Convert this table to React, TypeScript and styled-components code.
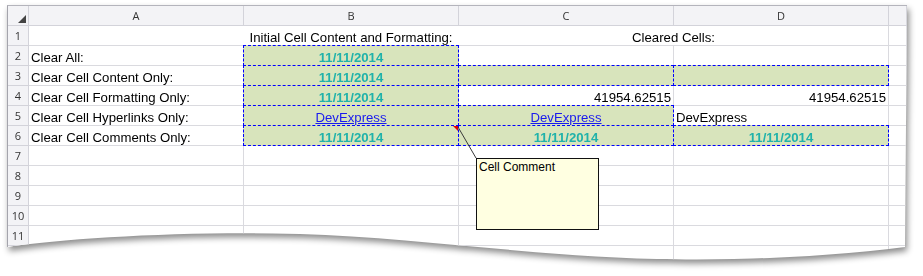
import styled, { createGlobalStyle } from 'styled-components'

const GlobalStyle = createGlobalStyle`
    body {
        margin: 0;
        background: #fff;
    }
`

type Kind = 'label' | 'date' | 'link' | 'num' | 'plain' | 'title'

type CellSpec = {
    text?: string
    kind?: Kind
    align?: 'left' | 'center' | 'right'
    fill?: boolean
    span?: number
    noRight?: boolean
    comment?: boolean
}

const DATE = '11/11/2014'
const NUM = '41954.62515'

const rows: CellSpec[][] = [
    [{ noRight: true }, { text: 'Initial Cell Content and Formatting:', kind: 'title', align: 'center', noRight: true }, { text: 'Cleared Cells:', kind: 'title', align: 'center', span: 2 }],
    [{ text: 'Clear All:' }, { text: DATE, kind: 'date', align: 'center', fill: true }, {}, {}],
    [{ text: 'Clear Cell Content Only:' }, { text: DATE, kind: 'date', align: 'center', fill: true }, { fill: true }, { fill: true }],
    [{ text: 'Clear Cell Formatting Only:' }, { text: DATE, kind: 'date', align: 'center', fill: true }, { text: NUM, kind: 'num', align: 'right' }, { text: NUM, kind: 'num', align: 'right' }],
    [{ text: 'Clear Cell Hyperlinks Only:' }, { text: 'DevExpress', kind: 'link', align: 'center', fill: true }, { text: 'DevExpress', kind: 'link', align: 'center', fill: true }, { text: 'DevExpress', kind: 'plain' }],
    [{ text: 'Clear Cell Comments Only:' }, { text: DATE, kind: 'date', align: 'center', fill: true, comment: true }, { text: DATE, kind: 'date', align: 'center', fill: true }, { text: DATE, kind: 'date', align: 'center', fill: true }],
    [{}, {}, {}, {}],
    [{}, {}, {}, {}],
    [{}, {}, {}, {}],
    [{}, {}, {}, {}],
    [{}, {}, {}, {}],
    [{}, {}, {}, {}],
]

const columns = ['A', 'B', 'C', 'D', '']

export default function App() {
    return (
        <Page>
            <GlobalStyle />
            <Stage>
                <Paper>
                    <Sheet>
                        <Corner />
                        {columns.map((c, i) => (
                            <ColHeader key={i}>{c}</ColHeader>
                        ))}
                        {rows.map((row, r) => (
                            <Row key={r} index={r + 1} cells={row} />
                        ))}
                    </Sheet>
                </Paper>
                <Connector width="900" height="260">
                    <line x1="451" y1="122" x2="469" y2="153" stroke="#3a3a3a" strokeWidth="1" />
                </Connector>
                <CommentBox>Cell Comment</CommentBox>
            </Stage>
        </Page>
    )
}

function Row({ index, cells }: { index: number; cells: CellSpec[] }) {
    return (
        <>
            <RowHeader>{index}</RowHeader>
            {cells.map((c, i) => (
                <Cell key={i} $align={c.align || 'left'} $fill={!!c.fill} $span={c.span || 1} $noRight={!!c.noRight}>
                    {c.text && <CellText $kind={c.kind || 'label'}>{c.text}</CellText>}
                    {c.comment && <CommentMark />}
                </Cell>
            ))}
            <Cell $align="left" $fill={false} $span={1} $noRight={false} />
        </>
    )
}

const Page = styled.div`
    padding: 5px 0 0 7px;
`

const Stage = styled.div`
    position: relative;
    width: 900px;
    height: 268px;
`

const Paper = styled.div`
    filter: drop-shadow(2px 4px 3px rgba(0, 0, 0, 0.45));
`

const Sheet = styled.div`
    display: grid;
    grid-template-columns: 21px repeat(4, 215px) 1fr;
    grid-auto-rows: 20px;
    width: 900px;
    height: 261px;
    box-sizing: border-box;
    border-top: 1px solid #b4b4bc;
    border-left: 1px solid #a4a4ac;
    background: #fff;
    overflow: hidden;
    clip-path: path('M0 0 H900 L899 120 L898 242 C 820 252, 725 256, 650 254 C 525 251, 400 232, 293 229 C 180 226, 60 233, 0 242 Z');
    font-family: "Liberation Sans", Arial, sans-serif;
    font-size: 13.2px;
`

const HeaderBase = styled.div`
    display: flex;
    align-items: center;
    justify-content: center;
    box-sizing: border-box;
    background: #f3f3f6;
    border-right: 1px solid #d3d3da;
    border-bottom: 1px solid #d3d3da;
    color: #333;
    font-family: "Open Sans", "Noto Sans", sans-serif;
    font-size: 11px;
`

const Corner = styled(HeaderBase)`
    position: relative;
    &::after {
        content: '';
        position: absolute;
        right: 2px;
        bottom: 2px;
        width: 0;
        height: 0;
        border-bottom: 8px solid #444;
        border-left: 8px solid transparent;
    }
`

const ColHeader = styled(HeaderBase)``

const RowHeader = styled(HeaderBase)``

const Cell = styled.div<{ $align: string; $fill: boolean; $span: number; $noRight: boolean }>`
    display: flex;
    align-items: flex-end;
    justify-content: ${p => (p.$align === 'center' ? 'center' : p.$align === 'right' ? 'flex-end' : 'flex-start')};
    grid-column: span ${p => p.$span};
    box-sizing: border-box;
    min-width: 0;
    padding: 0 2px;
    border-right: 1px solid ${p => (p.$noRight ? 'transparent' : '#dadadf')};
    border-bottom: 1px solid #dadadf;
    white-space: nowrap;
    line-height: 15px;
    color: #000;
    ${p =>
        p.$fill &&
        `
        position: relative;
        z-index: 1;
        margin: -1px 0 0 -1px;
        padding: 0 2px;
        border: 1px dashed #0000ff;
        background: #d8e4bc;
    `}
`

const CellText = styled.span<{ $kind: Kind }>`
    font-weight: ${p => (p.$kind === 'date' ? 700 : 400)};
    color: ${p => (p.$kind === 'date' ? '#20b2aa' : p.$kind === 'link' ? '#1a1aee' : '#000')};
    text-decoration: ${p => (p.$kind === 'link' ? 'underline' : 'none')};
`

const CommentMark = styled.span`
    position: absolute;
    top: 0;
    right: 0;
    width: 0;
    height: 0;
    border-top: 5px solid #e00000;
    border-left: 5px solid transparent;
`

const Connector = styled.svg`
    position: absolute;
    left: 0;
    top: 0;
    pointer-events: none;
`

const CommentBox = styled.div`
    position: absolute;
    left: 469px;
    top: 153px;
    width: 123px;
    height: 72px;
    box-sizing: border-box;
    padding: 1px 2px;
    border: 1px solid #111;
    background: #ffffe1;
    color: #000;
    font-family: "Liberation Sans", Arial, sans-serif;
    font-size: 12px;
    line-height: 14px;
`
